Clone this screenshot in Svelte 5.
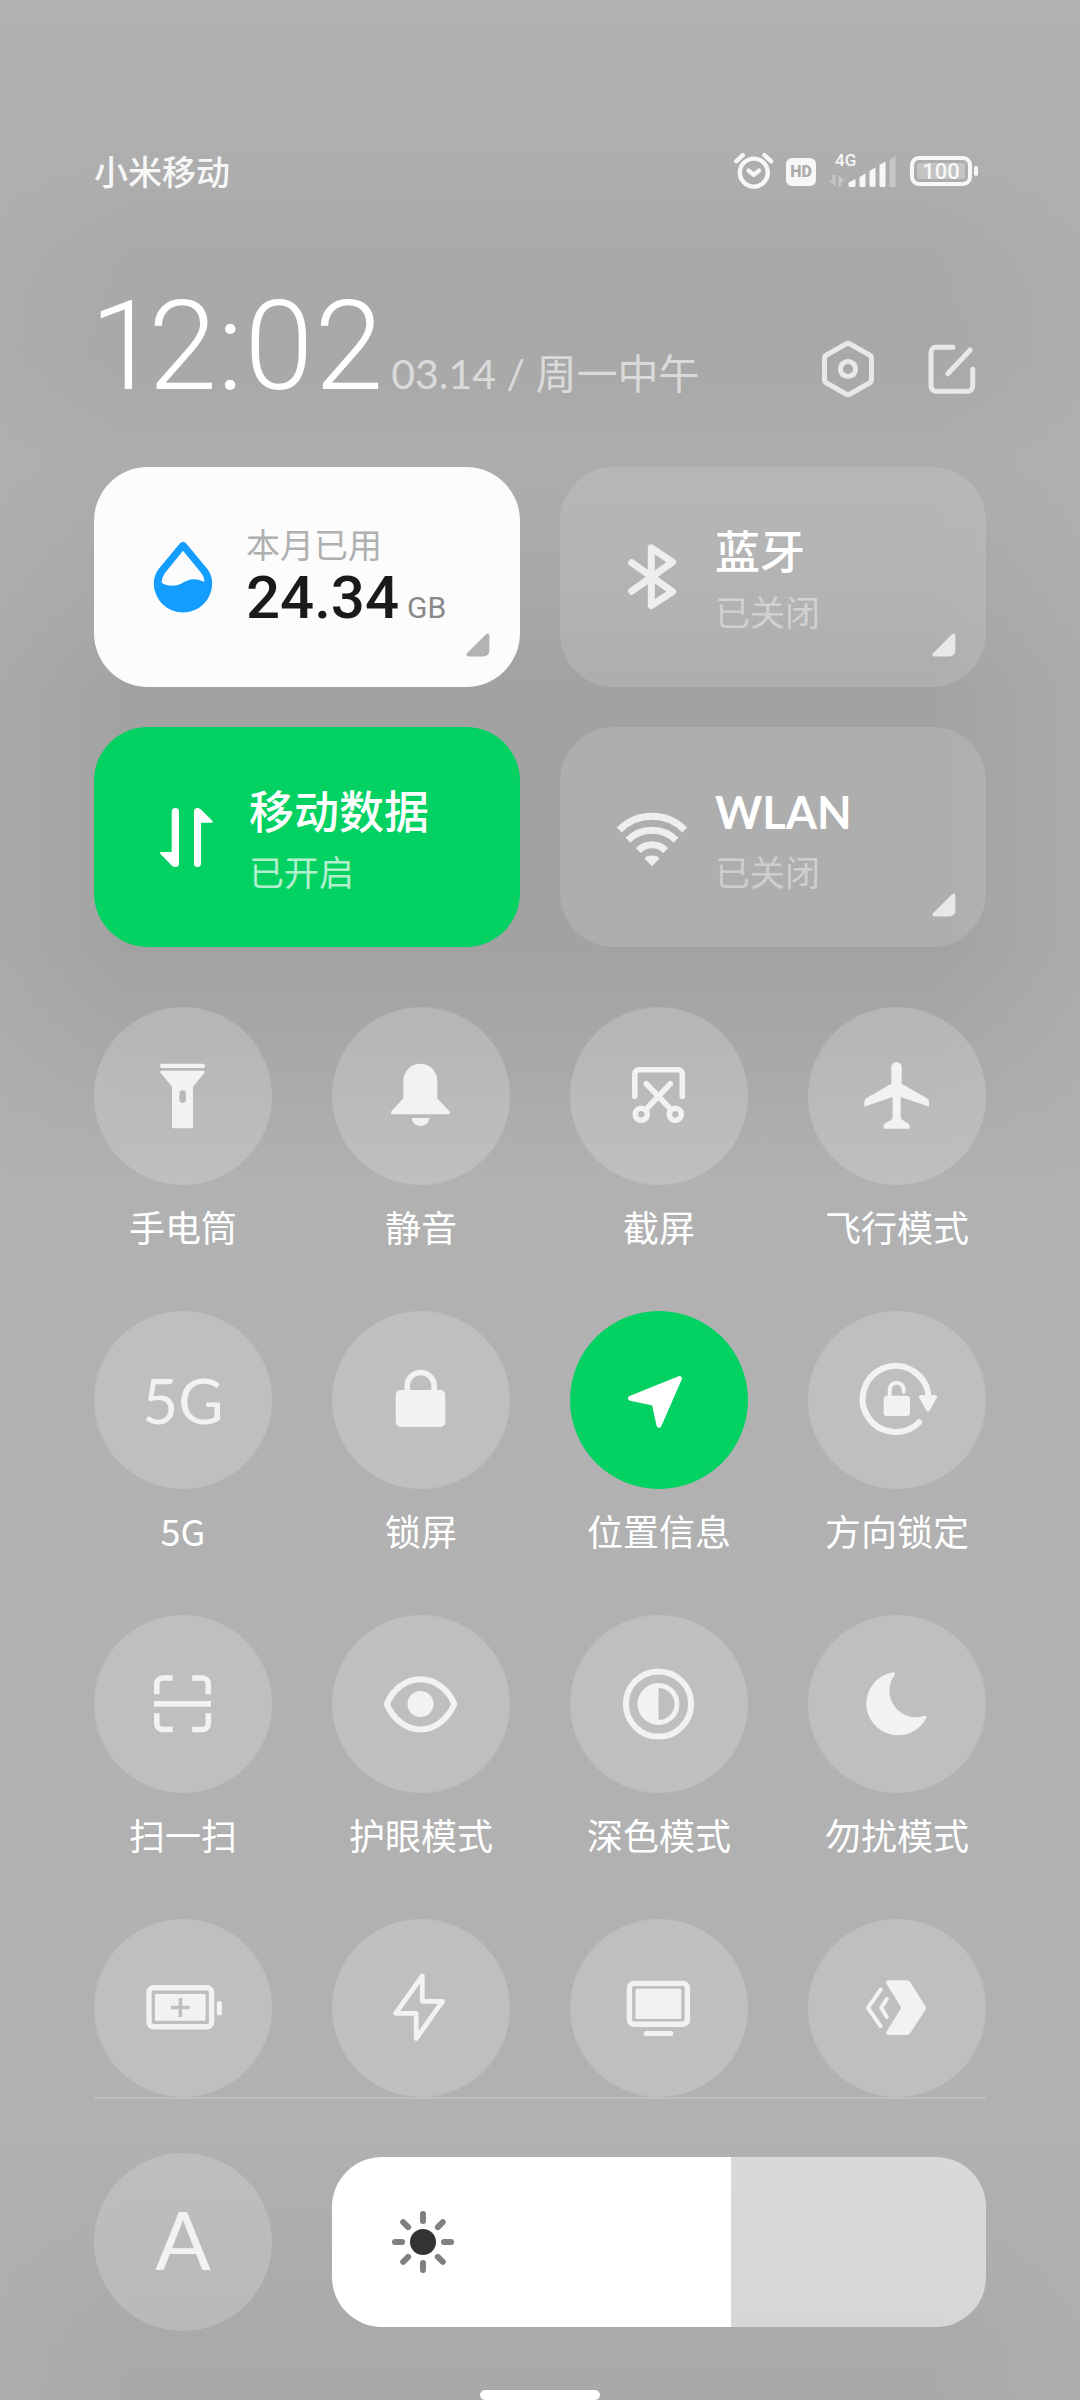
<script>
  const stroke = 'fill="none" stroke="currentColor" stroke-linecap="round" stroke-linejoin="round"';

  // Glyphs are drawn on a 96 x 96 grid
  const glyphs = {
    torch: `<rect x="25.3" y="15.7" width="44.4" height="4.4" rx="1.5" />
      <path fill-rule="evenodd" d="M26.3 22.7H68.7Q69.7 22.7 69.7 23.7V24.5L58 38.7V79Q58 80.3 56.7 80.3H38.3Q37 80.3 37 79V38.7L25.3 24.5V23.7Q25.3 22.7 26.3 22.7ZM47.7 42.3a3.3 3.3 0 0 0-3.3 3.3v6a3.3 3.3 0 0 0 6.6 0v-6a3.3 3.3 0 0 0-3.3-3.3Z" />`,
    bell: `<path d="M30.3 32.7a17 17 0 0 1 34 0V50.3L76.6 63.6Q77.6 66.3 75.5 66.3H19.3Q17.3 66.3 18.3 63.6L30.3 50.3Z" />
      <path d="M40 70H55.1Q56.6 70 56.2 71.4a9 9 0 0 1-17.3 0Q38.5 70 40 70Z" />`,
    screenshot: `<g ${stroke} stroke-width="5.6"><path d="M23.8 48.5V25.7a4 4 0 0 1 4-4H67.3a4 4 0 0 1 4 4V48.5" />
      <path d="M35.3 35.7L60.5 62M59.3 35.7L34.5 62" /><circle cx="30.3" cy="66.3" r="6" /><circle cx="64.3" cy="66.3" r="6" /></g>`,
    plane: `<path d="M42.3 19.2a5.2 5.2 0 0 1 10.4 0V35.7L78 50.3Q80 51.7 80 54V57.3Q80 58.7 78.8 58.3L51.7 49V69.5Q52 71 53.5 72L59.5 75.6Q60.7 76.6 60.7 78.2V79.5Q60.7 80.7 59.5 80.7H35.8Q34.6 80.7 34.6 79.5V78.2Q34.6 76.6 35.8 75.6L41.8 72Q43.5 71 43.6 69.5V49L16.5 58.3Q15.3 58.7 15.3 57.3V54Q15.3 51.7 17.3 50.3L42.3 35.7Z" />`,
    lock: `<rect x="22.7" y="38" width="49.6" height="37" rx="5" />
      <path ${stroke} stroke-width="5.6" d="M34.2 41V34a13.5 13.5 0 0 1 27 0V41" />`,
    location: `<path stroke="currentColor" stroke-width="5" stroke-linejoin="round" d="M68.4 26.6L19.6 46.4L43.2 51.2L48 73.3Z" />`,
    rotation: `<path ${stroke} stroke-width="6" d="M70 70.3A33 33 0 1 1 79.5 44" />
      <path stroke="currentColor" stroke-width="4" stroke-linejoin="round" d="M72 45H86L79 57.5Z" />
      <rect x="34.7" y="43.7" width="26.3" height="20.3" rx="3" />
      <path ${stroke} stroke-width="4" d="M40.7 46V37.7a7 7 0 0 1 14 0V39.8" />`,
    scan: `<g fill="none" stroke="currentColor" stroke-width="5.6"><path d="M21.8 38.2V28a6 6 0 0 1 6-6H37.7M57.2 22H67.3a6 6 0 0 1 6 6V38.2M73.3 57.3V67.5a6 6 0 0 1-6 6H57.2M37.7 73.5H27.8a6 6 0 0 1-6-6V57.3M19 47.9H76" /></g>`,
    eye: `<path ${stroke} stroke-width="6" d="M13.8 48C20 33 33 23.2 47.5 23.2S75 33 81.3 48C75 63 62 73.4 47.5 73.4S20 63 13.8 48Z" />
      <circle cx="47.5" cy="48" r="13" />`,
    contrast: `<circle ${stroke} stroke-width="6" cx="47.5" cy="48" r="32.6" />
      <circle ${stroke} stroke-width="5" cx="47.5" cy="48" r="18.5" /><path d="M47.5 28V68A20 20 0 0 1 47.5 28Z" />`,
    moon: `<path d="M44 16.3Q46.8 16.3 45.6 19A26.5 26.5 0 0 0 75.2 59.9Q78.2 59.4 77.2 62.2A32 32 0 0 1 48.7 79.3A31.7 31.7 0 0 1 44 16.3Z" />`,
    battery: `<rect fill="none" stroke="currentColor" stroke-width="5.4" x="14" y="27.8" width="62.6" height="39" rx="4.5" />
      <path fill-rule="evenodd" d="M21 34H69.6Q70.6 34 70.6 35V59.7Q70.6 60.7 69.6 60.7H21Q20 60.7 20 59.7V35Q20 34 21 34ZM43.6 38V45.7H36V49.2H43.6V57H47.2V49.2H54.8V45.7H47.2V38Z" />
      <rect x="81.8" y="41" width="5.2" height="14.6" rx="2.4" />`,
    bolt: `<path ${stroke} stroke-width="4.8" d="M49.3 16L22.6 53.4H43.2V78.6L69.5 41.4H49.3Z" />`,
    display: `<rect fill="none" stroke="currentColor" stroke-width="5.4" x="18.4" y="23.4" width="58" height="40.8" rx="4.5" />
      <rect x="24.5" y="28.7" width="45.8" height="30.3" rx="1.5" /><rect x="32.7" y="71" width="29.6" height="5" rx="2.5" />`,
    cast: `<path d="M40 20.2H58Q60 20.2 61.3 22.2L76 45.5Q77.5 48 76 50.5L61.3 73Q60 75 58 75H40Q36 75 37.6 71.3L51.3 49.5Q52.2 47.7 51.3 46L37.6 24Q36 20.2 40 20.2Z" />
      <path ${stroke} stroke-width="4" d="M31.6 29.6L19 47.8L31.6 66.2M37.8 39L32.2 47.8L37.8 57" />`,
  };

  // Card glyphs are drawn on a 72 x 72 grid
  const cardGlyphs = {
    drop: `<path fill-rule="evenodd" d="M30 2.2Q33 -.8 36 2.2L57 27.5Q62.2 34 62.2 42.3A29.2 29.2 0 0 1 3.8 42.3Q3.8 34 9 27.5ZM33 9.7L14.5 32.5Q11.7 37 11.7 41.7C16 45 25 46 31.5 42.5C39 38.3 43 36.2 54.5 40.7Q54.3 35.5 51.5 32.2Z" />`,
    bluetooth: `<path ${stroke} stroke-width="7" d="M15.7 21.7L56.5 50.7L35.3 64.6V6.8L56.5 21.2L15.7 50.2" />`,
    data: `<path d="M21.7 10.7a3.65 3.65 0 0 1 7.3 0V62.5Q29 66 25.3 66Q23.3 66 22 64.7L10.2 52.7Q9.3 51 11 51H21.7Z" />
      <path d="M44 62.4V10.5Q44 7 47.5 7Q49.5 7 51 8.5L62.5 20Q63.3 21.7 61.6 21.7H51V62.4a3.5 3.5 0 0 1-7 0Z" />`,
    wifi: `<path fill="none" stroke="currentColor" stroke-width="7" stroke-linejoin="round" d="M3.3 29A46 46 0 0 1 68.7 29M12 39.3A33.8 33.8 0 0 1 60 39.3M22.3 49.7A18.6 18.6 0 0 1 49.7 49.7" />
      <path d="M36 65.3L28.9 58Q28.4 56.6 30 55.8A14 14 0 0 1 42 55.8Q43.6 56.6 43.1 58Z" />`,
  };

  let cards = $state([
    { id: 'bluetooth', title: '蓝牙', status: '已关闭', on: false, more: true },
    { id: 'data', title: '移动数据', status: '已开启', on: true, more: false },
    { id: 'wifi', title: 'WLAN', status: '已关闭', on: false, more: true, latin: true },
  ]);

  let tiles = $state([
    { icon: 'torch', label: '手电筒', on: false },
    { icon: 'bell', label: '静音', on: false },
    { icon: 'screenshot', label: '截屏', on: false },
    { icon: 'plane', label: '飞行模式', on: false },
    { text: '5G', label: '5G', on: false },
    { icon: 'lock', label: '锁屏', on: false },
    { icon: 'location', label: '位置信息', on: true },
    { icon: 'rotation', label: '方向锁定', on: false },
    { icon: 'scan', label: '扫一扫', on: false },
    { icon: 'eye', label: '护眼模式', on: false },
    { icon: 'contrast', label: '深色模式', on: false },
    { icon: 'moon', label: '勿扰模式', on: false },
    { icon: 'battery', on: false },
    { icon: 'bolt', on: false },
    { icon: 'display', on: false },
    { icon: 'cast', on: false },
  ]);

  let brightness = $state(61);
  const rays = [0, 45, 90, 135, 180, 225, 270, 315];
</script>

{#snippet corner()}
  <svg class="corner" viewBox="0 0 24 24" aria-hidden="true">
    <path d="M20 1.2Q23.4 -1 23.4 3V17Q23.4 23.4 17 23.4H2.4Q-1 22.8 1 20.2Z" />
  </svg>
{/snippet}

<main class="panel">
  <div class="status-bar">
    <span class="carrier">小米移动</span>
    <div class="status-icons">
      <svg width="40" height="40" viewBox="0 0 40 40">
        <g fill="none" stroke="currentColor" stroke-linecap="round" stroke-width="4.4">
          <circle cx="19.8" cy="20.6" r="14" />
          <path d="M14.6 18.6L19.8 22.8L25 18.6" stroke-linejoin="round" />
          <path d="M2.4 9.2L8.8 3.2M30.4 3.2L37 9.2" />
        </g>
      </svg>
      <span class="hd">HD</span>
      <svg width="70" height="48" viewBox="0 -4 70 48">
        <text x="7" y="14" font-size="17" font-weight="500">4G</text>
        <g opacity="0.35">
          <path d="M4.5 23h3v11.5L1 28.5h3.5zM10.5 34.5h3V29H17l-6.500-6z" />
          <path d="M61.500 8L67.500 4V35H61.500z" />
        </g>
        <path d="M20.500 30.500L27.500 27V33.500Q27.500 35 26 35H22Q20.500 35 20.500 33.500zM31.500 25L37.500 21.500V33.500Q37.500 35 36 35H33Q31.500 35 31.500 33.500zM41.500 19L47.500 15.500V33.500Q47.500 35 46 35H43Q41.500 35 41.500 33.500zM51.500 13L57.500 9.500V33.500Q57.500 35 56 35H53Q51.500 35 51.500 33.500z" />
      </svg>
      <svg width="68" height="40" viewBox="0 0 68 40">
        <rect x="2" y="6" width="58" height="26" rx="7" fill="none" stroke="currentColor" stroke-width="4" />
        <rect x="7" y="11" width="48" height="16" rx="3" opacity="0.3" />
        <rect x="64" y="14" width="4" height="10" rx="2" />
        <text x="31" y="27" font-size="22" font-weight="500" text-anchor="middle">100</text>
      </svg>
    </div>
  </div>

  <header class="header">
    <div class="when">
      <time class="clock">12:02</time>
      <span class="date">03.14 / 周一中午</span>
    </div>
    <div class="actions">
      <button aria-label="设置">
        <svg viewBox="0 0 60 60">
          <path d="M28 5Q30 3.800 32 5L51.500 16Q53.500 17.200 53.500 19.500V40.500Q53.500 42.800 51.500 44L32 55Q30 56.200 28 55L8.500 44Q6.500 42.800 6.500 40.500V19.500Q6.500 17.200 8.500 16Z" />
          <circle cx="30" cy="30" r="7.600" />
        </svg>
      </button>
      <button aria-label="编辑">
        <svg viewBox="0 0 60 60">
          <path d="M31 8.300H14A5 5 0 0 0 9 13.300V47.200A5 5 0 0 0 14 52.200H45.700A5 5 0 0 0 50.700 47.200V30.300M48.200 11L25.800 34.800" />
        </svg>
      </button>
    </div>
  </header>

  <section class="cards">
    <button class="card usage">
      <svg class="card-icon" viewBox="0 0 72 72">{@html cardGlyphs.drop}</svg>
      <span class="card-text">
        <span class="usage-label">本月已用</span>
        <span class="usage-value"><span>24.34</span><small>GB</small></span>
      </span>
      {@render corner()}
    </button>
    {#each cards as card (card.id)}
      <button class="card" class:on={card.on} aria-pressed={card.on} onclick={() => (card.on = !card.on)}>
        <svg class="card-icon" viewBox="0 0 72 72">{@html cardGlyphs[card.id]}</svg>
        <span class="card-text">
          <span class="card-title" class:latin={card.latin}>{card.title}</span>
          <span class="card-status">{card.status}</span>
        </span>
        {#if card.more}
          {@render corner()}
        {/if}
      </button>
    {/each}
  </section>

  <section class="tiles">
    {#each tiles as tile}
      <button class="tile" class:on={tile.on} aria-pressed={tile.on} onclick={() => (tile.on = !tile.on)}>
        <span class="disc">
          {#if tile.icon}
            <svg viewBox="0 0 96 96">{@html glyphs[tile.icon]}</svg>
          {:else}
            <span class="disc-text">{tile.text}</span>
          {/if}
        </span>
        {#if tile.label}
          <span class="tile-label">{tile.label}</span>
        {/if}
      </button>
    {/each}
  </section>

  <footer class="brightness">
    <button class="disc auto">A</button>
    <label class="slider">
      <input
        type="range"
        min="0"
        max="100"
        aria-label="亮度"
        bind:value={brightness}
        style="--level: {brightness}%"
      />
      <svg class="sun" viewBox="0 0 64 64">
        <circle cx="32" cy="32" r="13" fill="#333" />
        {#each rays as angle}
          <path d="M32 4V11" transform="rotate({angle} 32 32)" />
        {/each}
      </svg>
    </label>
  </footer>

  <div class="home-bar"></div>
</main>

<style>
  :global(body) {
    margin: 0;
    background: #b1b1b1;
  }

  .panel {
    box-sizing: border-box;
    min-height: 100vh;
    padding: 148px 94px 0;
    display: flex;
    flex-direction: column;
    color: #fff;
    font-family: 'Noto Sans CJK SC', sans-serif;
    background:
      linear-gradient(90deg, rgba(177, 177, 177, 0.5), rgba(177, 177, 177, 0) 12%, rgba(177, 177, 177, 0) 86%, rgba(177, 177, 177, 0.6)),
      linear-gradient(
        180deg,
        #b1b1b1 0,
        #afafaf 140px,
        #a9a9a9 260px,
        #a8a8a8 350px,
        #adadad 460px,
        #a8a8a8 590px,
        #a2a2a2 690px,
        #a2a2a2 950px,
        #aaaaaa 1080px,
        #b1b1b1 1180px,
        #b1b1b1 2130px,
        #a9aaab 2330px,
        #a8a9aa 2400px
      );
  }

  button {
    margin: 0;
    padding: 0;
    border: 0;
    background: none;
    color: inherit;
    font: inherit;
    cursor: pointer;
  }

  svg {
    display: block;
    fill: currentColor;
  }

  /* Status bar */
  .status-bar {
    height: 48px;
    display: flex;
    align-items: center;
    justify-content: space-between;
    padding-right: 8px;
    color: #f7f7f7;
  }

  .carrier {
    font-size: 34px;
    line-height: 44px;
    padding-bottom: 2px;
    font-weight: 500;
  }

  .status-icons {
    display: flex;
    align-items: center;
    gap: 12px;
    font-family: Roboto, sans-serif;
  }

  .hd {
    width: 30px;
    height: 28px;
    border-radius: 6px;
    background: #f7f7f7;
    color: #acacac;
    font-size: 16px;
    line-height: 28px;
    font-weight: 900;
    text-align: center;
  }

  /* Clock and date */
  .header {
    display: flex;
    align-items: flex-end;
    justify-content: space-between;
    padding: 83px 4px 52px 0;
  }

  .when {
    display: flex;
    align-items: baseline;
    gap: 8px;
  }

  .clock {
    font-family: Roboto, sans-serif;
    font-size: 124px;
    line-height: 136px;
    font-weight: 300;
    font-variant-numeric: proportional-nums;
  }

  .date {
    font-family: Lato, 'Noto Sans CJK SC', sans-serif;
    font-size: 41px;
    color: #dadada;
  }

  .actions {
    display: flex;
    gap: 44px;
    padding-bottom: 16px;
    color: #e8e8e8;
  }

  .actions svg {
    width: 60px;
    height: 60px;
    fill: none;
    stroke: currentColor;
    stroke-width: 5;
    stroke-linecap: round;
    stroke-linejoin: round;
  }

  /* Large cards */
  .cards {
    display: grid;
    grid-template-columns: repeat(2, 1fr);
    gap: 40px;
  }

  .card {
    position: relative;
    height: 220px;
    padding-left: 56px;
    display: flex;
    align-items: center;
    gap: 27px;
    border-radius: 54px;
    background: rgba(255, 255, 255, 0.13);
    text-align: left;
  }

  .card-icon {
    width: 72px;
    height: 72px;
    flex: none;
    color: #eee;
  }

  .card-text {
    display: flex;
    flex-direction: column;
    padding-top: 8px;
  }

  .card-title {
    font-family: Lato, 'Noto Sans CJK SC', sans-serif;
    font-size: 45px;
    line-height: 60px;
    font-weight: 500;
  }

  .card-title.latin {
    font-weight: 700;
  }

  .card-status {
    font-size: 35px;
    line-height: 58px;
    color: rgba(255, 255, 255, 0.42);
  }

  .card.on {
    background: #03d162;
  }

  .card.on .card-icon {
    color: #fff;
  }

  .card.on .card-status {
    color: rgba(255, 255, 255, 0.7);
  }

  .usage {
    gap: 24px;
    background: #fcfcfc;
  }

  .usage .card-icon {
    color: #139dff;
  }

  .usage .card-text {
    padding-top: 4px;
  }

  .usage-label {
    font-size: 34px;
    line-height: 48px;
    color: #b0b0b0;
  }

  .usage-value {
    display: flex;
    align-items: baseline;
    gap: 8px;
    font-family: Roboto, sans-serif;
    font-size: 60px;
    line-height: 60px;
    font-weight: 500;
    color: #1a1a1a;
  }

  .usage-value small {
    font-size: 30px;
    font-weight: 400;
    color: #888;
  }

  .corner {
    position: absolute;
    right: 30px;
    bottom: 30px;
    width: 24px;
    height: 24px;
    color: #e8e8e8;
  }

  .usage .corner {
    color: #b3b3b3;
  }

  /* Round toggles */
  .tiles {
    margin-top: 60px;
    display: grid;
    grid-template-columns: repeat(4, 178px);
    justify-content: space-between;
    row-gap: 58px;
  }

  .tile {
    display: flex;
    flex-direction: column;
    align-items: center;
    gap: 14px;
  }

  .disc {
    box-sizing: border-box;
    width: 178px;
    height: 178px;
    display: flex;
    align-items: center;
    justify-content: center;
    flex: none;
    border-radius: 50%;
    background: rgba(255, 255, 255, 0.18);
    color: #f2f2f2;
  }

  .disc svg {
    width: 96px;
    height: 96px;
  }

  .disc-text {
    font-family: Lato, sans-serif;
    font-size: 62px;
  }

  .tile.on .disc {
    background: #03d162;
    color: #fff;
  }

  .tile-label {
    font-size: 36px;
    line-height: 54px;
    white-space: nowrap;
  }

  /* Brightness */
  .brightness {
    display: flex;
    align-items: center;
    gap: 60px;
    padding: 54px 0 59px;
    border-top: 2px solid rgba(255, 255, 255, 0.18);
  }

  .auto {
    padding-bottom: 8px;
    font-family: Lato, sans-serif;
    font-size: 82px;
  }

  .slider {
    position: relative;
    flex: 1;
  }

  .slider input {
    appearance: none;
    display: block;
    width: 100%;
    height: 170px;
    margin: 0;
    border-radius: 50px;
    background: linear-gradient(90deg, #fff var(--level), rgba(255, 255, 255, 0.52) var(--level));
    cursor: pointer;
  }

  .slider input::-webkit-slider-thumb {
    appearance: none;
    width: 2px;
    height: 170px;
    background: transparent;
  }

  .sun {
    position: absolute;
    left: 59px;
    top: 53px;
    width: 64px;
    height: 64px;
    stroke: #808080;
    stroke-width: 6;
    stroke-linecap: round;
    pointer-events: none;
  }

  .sun circle {
    stroke: none;
  }

  .home-bar {
    align-self: center;
    width: 120px;
    height: 10px;
    border-radius: 5px;
    background: #fff;
  }
</style>
